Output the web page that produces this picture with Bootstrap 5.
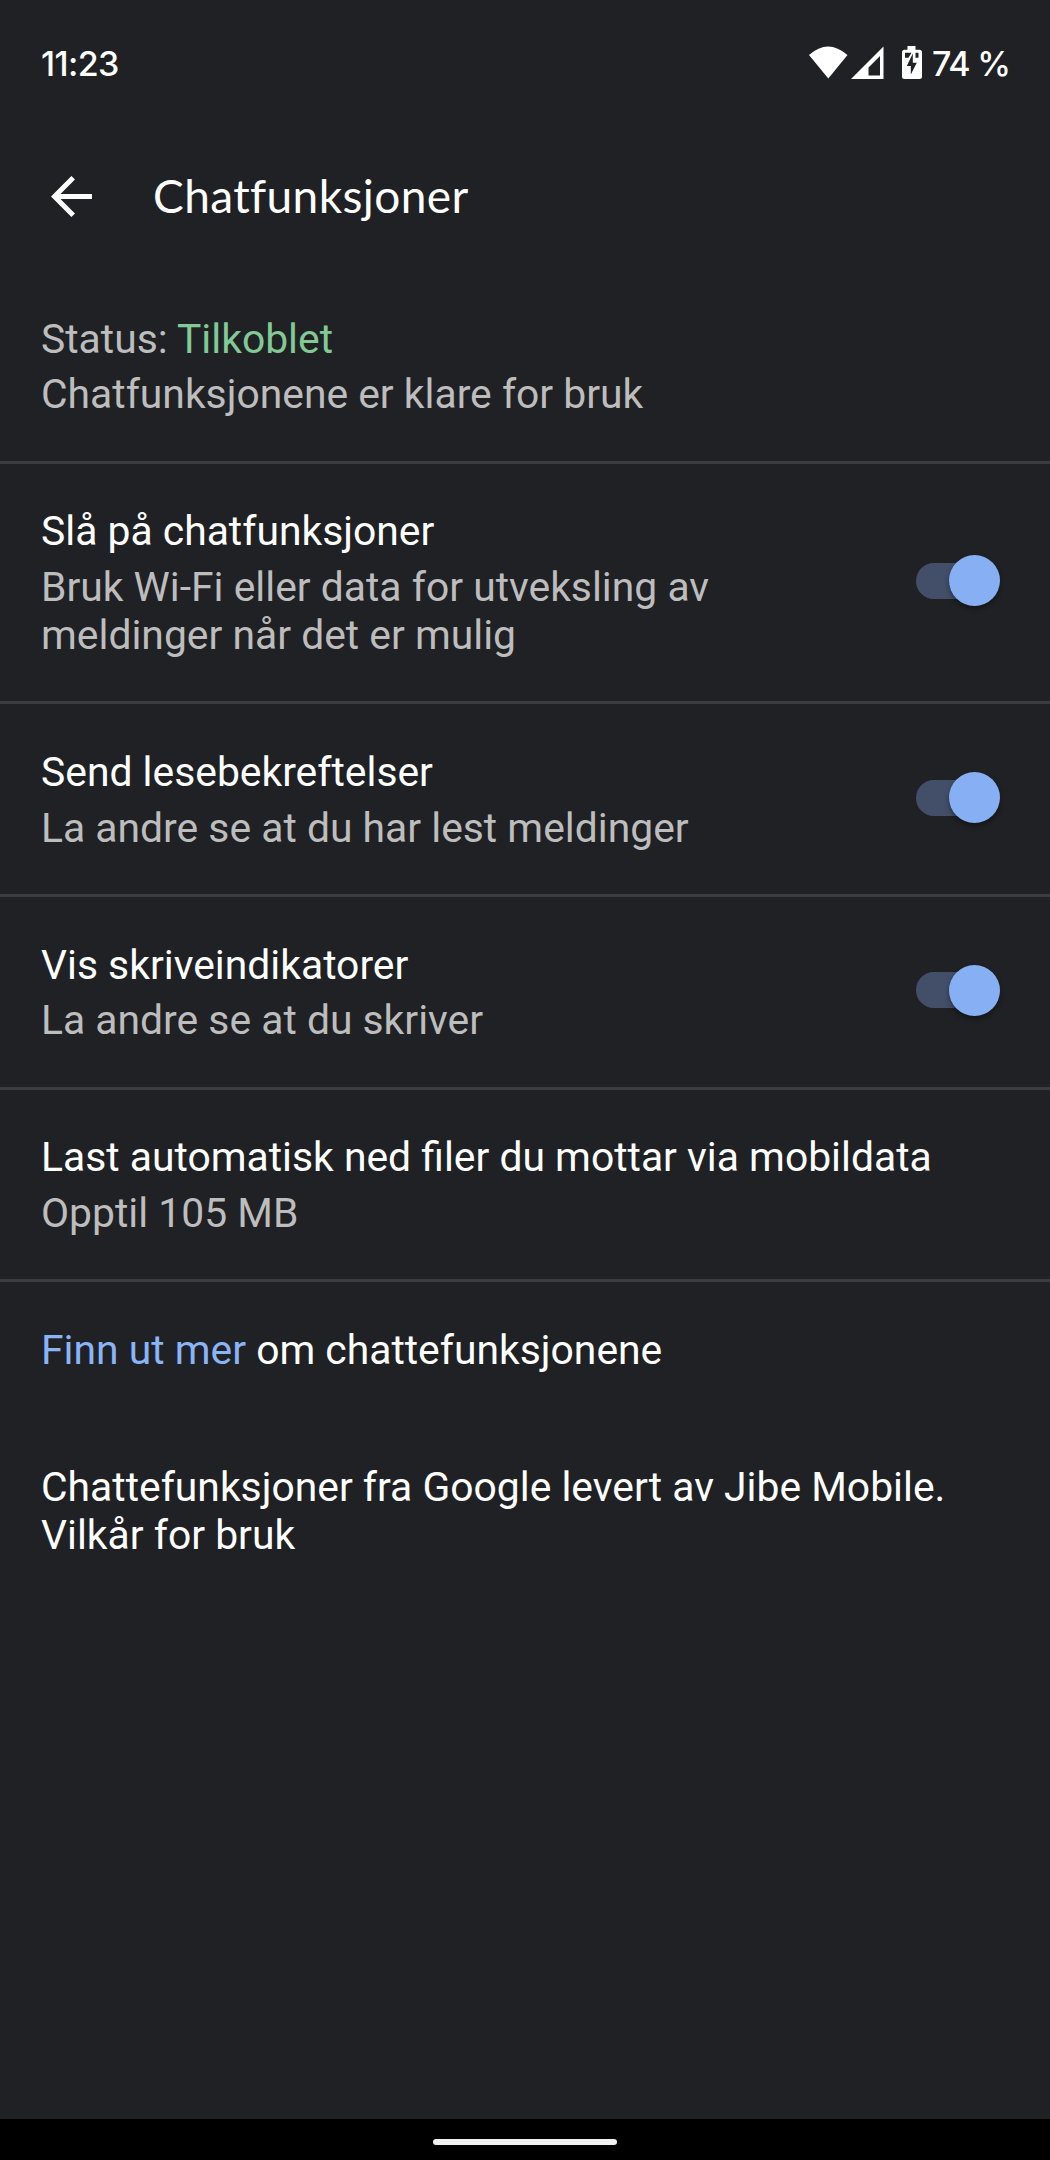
<!DOCTYPE html>
<html lang="nb" data-bs-theme="dark">
<head>
<meta charset="utf-8">
<meta name="viewport" content="width=device-width, initial-scale=1">
<title>Chatfunksjoner</title>
<link href="https://cdn.jsdelivr.net/npm/bootstrap@5.3.0/dist/css/bootstrap.min.css" rel="stylesheet">
<style>
body{background:#202124;color:#fff;font-family:Roboto,sans-serif;font-size:40.83px;line-height:48.3px;min-height:2160px}
.statusbar{height:128px;padding:0 42px 0 41px;font-family:Inter,sans-serif;font-weight:500;font-size:34px;line-height:40px}
.clock{letter-spacing:-.6px}
.status-icons{margin-right:10px}
.battery-text{letter-spacing:-1.2px;width:76px;white-space:nowrap}
.appbar{height:136px;padding:0 51px}
.screen-title{font-family:Lato,sans-serif;font-size:46px;line-height:56px;font-weight:400;margin-left:61px;letter-spacing:.4px}
.settings-list{padding-top:7.700px}
.setting{padding:43.800px 49px 42.150px 41px;border-bottom:3px solid #3c3d41}
.setting:first-child{padding-top:43px}
.setting.borderless{border-bottom:0}
.setting.legal{padding-top:46.500px}
.gap-line{margin-top:7.1px}
.muted-text{color:#bdbdbd}
.online{color:#81c995}
.more-link{color:#8ab4f8}
.toggle.form-check-input{-webkit-appearance:none;appearance:none;position:relative;flex:none;width:72px;height:36px;margin:-5px 13px 0 0;border:0;border-radius:18px;background:#434f68}
.toggle.form-check-input:checked{background:#434f68}
.toggle::after{content:"";position:absolute;left:33px;top:-7.5px;width:51px;height:51px;border-radius:50%;background:#87aff3;box-shadow:0 3px 5px rgba(0,0,0,.38)}
.navpill{height:41px;background:#000;padding-top:5px}
.navpill span{width:184px;height:6px;border-radius:3px;background:#f1f1f1}
</style>
</head>
<body class="d-flex flex-column">
<header class="statusbar d-flex align-items-center justify-content-between">
  <span class="clock">11:23</span>
  <span class="d-flex align-items-center">
    <svg class="status-icons" width="113" height="40" viewBox="0 2.500 113 40" fill="#fff">
      <path d="M0 13.500Q19 -3.500 38.500 13.500L19.300 37Z"/>
      <path fill-rule="evenodd" d="M74.500 5V37.500H42ZM71 14.500L59.500 26V34H71Z"/>
      <path fill-rule="evenodd" d="M98.500 4.500h8v3.800h4q2.500 0 2.500 2.500V35q0 2.500-2.500 2.500h-15Q93 37.500 93 35V10.800q0-2.500 2.500-2.500h3ZM96 11.200v5h3.500l3-5ZM106.500 11.200v5h3v-5ZM103.800 12l-6 12.500h4V33l6-11.800h-4Z"/>
    </svg>
    <span class="battery-text">74 %</span>
  </span>
</header>
<div class="appbar d-flex align-items-center">
  <svg width="41" height="41" viewBox="0 0 41 41" fill="none" stroke="#fff" stroke-width="5"><path d="M41 20.500H4M22.200 1.800L3.500 20.500L22.200 39.200"/></svg>
  <h1 class="screen-title mb-0">Chatfunksjoner</h1>
</div>
<main class="settings-list flex-grow-1">
  <section class="setting">
    <div class="muted-text">Status: <span class="online">Tilkoblet</span></div>
    <div class="muted-text gap-line">Chatfunksjonene er klare for bruk</div>
  </section>
  <label class="setting d-flex align-items-center justify-content-between">
    <span><span class="d-block">Slå på chatfunksjoner</span>
    <span class="d-block muted-text gap-line">Bruk Wi-Fi eller data for utveksling av<br>meldinger når det er mulig</span></span>
    <input class="form-check-input toggle" type="checkbox" role="switch" checked>
  </label>
  <label class="setting d-flex align-items-center justify-content-between">
    <span><span class="d-block">Send lesebekreftelser</span>
    <span class="d-block muted-text gap-line">La andre se at du har lest meldinger</span></span>
    <input class="form-check-input toggle" type="checkbox" role="switch" checked>
  </label>
  <label class="setting d-flex align-items-center justify-content-between">
    <span><span class="d-block">Vis skriveindikatorer</span>
    <span class="d-block muted-text gap-line">La andre se at du skriver</span></span>
    <input class="form-check-input toggle" type="checkbox" role="switch" checked>
  </label>
  <section class="setting">
    <div>Last automatisk ned filer du mottar via mobildata</div>
    <div class="muted-text gap-line">Opptil 105 MB</div>
  </section>
  <section class="setting borderless">
    <p class="mb-0"><a class="more-link text-decoration-none" href="#">Finn ut mer</a> om chattefunksjonene</p>
  </section>
  <section class="setting borderless legal">
    <p class="mb-0">Chattefunksjoner fra Google levert av Jibe Mobile.<br>Vilkår for bruk</p>
  </section>
</main>
<footer class="navpill d-flex align-items-center justify-content-center"><span></span></footer>
<script src="https://cdn.jsdelivr.net/npm/bootstrap@5.3.0/dist/js/bootstrap.bundle.min.js"></script>
</body>
</html>
